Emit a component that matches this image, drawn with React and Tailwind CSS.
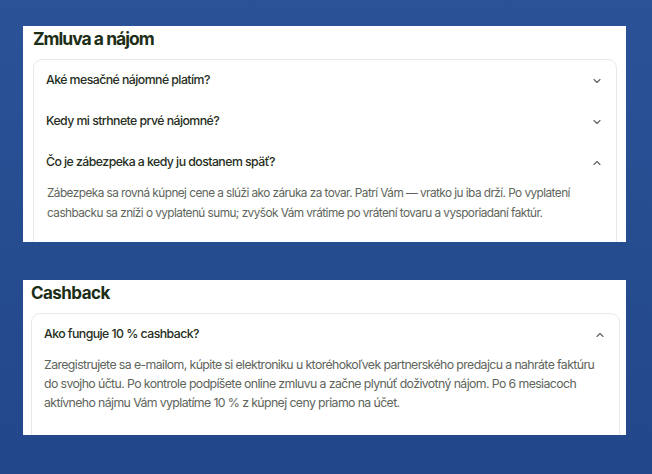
import React, { useState } from 'react';
import { ChevronDown, ChevronUp } from 'lucide-react';

const contract = [
    { q: 'Aké mesačné nájomné platím?' },
    { q: 'Kedy mi strhnete prvé nájomné?' },
    {
        q: 'Čo je zábezpeka a kedy ju dostanem späť?',
        a: 'Zábezpeka sa rovná kúpnej cene a slúži ako záruka za tovar. Patrí Vám — vratko ju iba drží. Po vyplatení cashbacku sa zníži o vyplatenú sumu; zvyšok Vám vrátime po vrátení tovaru a vysporiadaní faktúr.',
    },
];

const cashback = [
    {
        q: 'Ako funguje 10 % cashback?',
        a: 'Zaregistrujete sa e-mailom, kúpite si elektroniku u ktoréhokoľvek partnerského predajcu a nahráte faktúru do svojho účtu. Po kontrole podpíšete online zmluvu a začne plynúť doživotný nájom. Po 6 mesiacoch aktívneho nájmu Vám vyplatíme 10 % z kúpnej ceny priamo na účet.',
    },
];

const font = { fontFamily: 'Inter, "Noto Sans", sans-serif' };

const FaqItem = ({ item, open, onToggle, answerCls }) => (
    <div>
        <button
            onClick={onToggle}
            className="flex h-[41px] w-full items-center justify-between pl-[12px] pr-[13px] text-left"
        >
            <span className="text-[12.3px] font-medium tracking-[-0.55px] text-[#262e21]">{item.q}</span>
            {open ? (
                <ChevronUp size={12} strokeWidth={2.2} className="text-[#5f635d]" />
            ) : (
                <ChevronDown size={12} strokeWidth={2.2} className="text-[#5f635d]" />
            )}
        </button>
        {open && item.a && <p className={`text-[#60655c] ${answerCls}`}>{item.a}</p>}
    </div>
);

const Section = ({ title, items, defaultOpen, boxCls, titleCls, answerCls }) => {
    const [openIdx, setOpenIdx] = useState(defaultOpen);
    return (
        <section className={`overflow-hidden bg-white pt-[2px] ${boxCls}`} style={font}>
            <h2 className={`font-bold leading-[22px] text-[#1d2e17] ${titleCls}`}>{title}</h2>
            <div className="mt-[9px] rounded-[9px] border border-[#e9eae8] pb-10">
                {items.map((item, i) => (
                    <FaqItem
                        key={item.q}
                        item={item}
                        answerCls={answerCls}
                        open={openIdx === i}
                        onToggle={() => setOpenIdx(openIdx === i ? -1 : i)}
                    />
                ))}
            </div>
        </section>
    );
};

export default function App() {
    return (
        <div className="flex h-[474px] w-[652px] flex-col bg-gradient-to-b from-[#2b5297] to-[#22478a] pl-[23px] pr-[26px] pt-[26px]">
            <Section
                title="Zmluva a nájom"
                items={contract}
                defaultOpen={2}
                boxCls="h-[216px] pl-[10px] pr-[9px]"
                titleCls="text-[17.5px] tracking-[-1px]"
                answerCls="pl-[13px] pr-[34px] text-[11.8px] leading-[20px] tracking-[-0.55px]"
            />
            <div className="mt-[38px]">
                <Section
                    title="Cashback"
                    items={cashback}
                    defaultOpen={0}
                    boxCls="h-[155px] pl-[8px] pr-[6px]"
                    titleCls="text-[17px] tracking-[-0.55px]"
                    answerCls="pl-[12px] pr-[12px] text-[12.3px] leading-[19px] tracking-[-0.6px]"
                />
            </div>
        </div>
    );
}
